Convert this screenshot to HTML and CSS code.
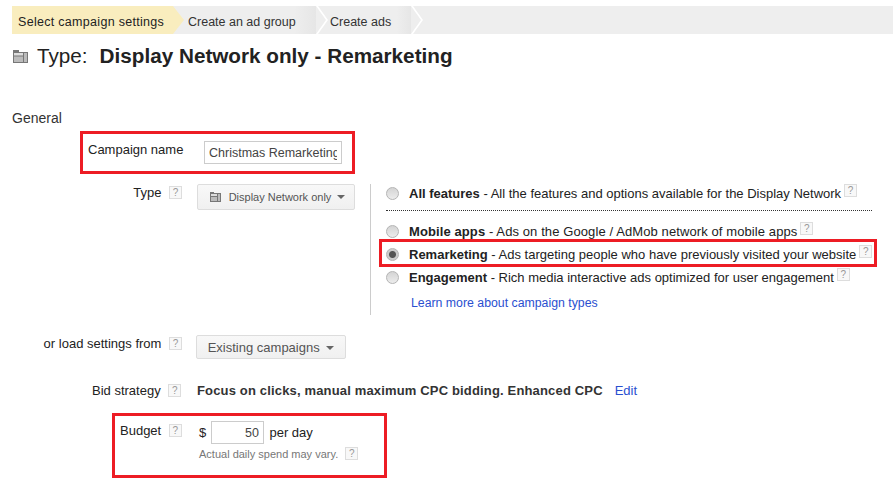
FILE: index.html
```html
<!DOCTYPE html>
<html lang="en">
<head>
    <meta charset="UTF-8">
    <meta name="viewport" content="width=device-width, initial-scale=1.0">
    <title>Select campaign settings</title>
    <link rel="stylesheet" href="styles.css">
</head>
<body>
    <div class="steps">
        <div class="step step-active">Select campaign settings</div>
        <div class="step step-group">Create an ad group</div>
        <div class="step step-ads">Create ads</div>
    </div>

    <h1 class="page-title">
        <svg class="title-icon" width="15" height="13" viewBox="0 0 15 13"><path d="M0 0h6v2h9v11H0z" fill="#777"/><path d="M1 3h9v2.500H1z" fill="#ddd"/><path d="M1 6.500h9V12H1zM11 3h3v9h-3z" fill="#bbb"/></svg>
        <span class="title-type">Type:</span>
        <strong>Display Network only - Remarketing</strong>
    </h1>

    <h2 class="section-title">General</h2>

    <div class="name-box">
        <label class="name-label" for="campaignName">Campaign name</label>
        <input class="text-input name-input" type="text" id="campaignName" value="Christmas Remarketing">
    </div>

    <div class="type-row">
        <div class="row-label">Type <span class="help">?</span></div>
        <button class="btn type-btn">
            <svg class="btn-icon" width="11" height="10" viewBox="0 0 11 10"><path d="M0 0h4v1h7v9H0z" fill="#777"/><path d="M1 2h6v2H1z" fill="#ddd"/><path d="M1 5h6v4H1zM8 2h2v7H8z" fill="#bbb"/></svg>
            Display Network only <span class="caret"></span>
        </button>
        <div class="type-options">
            <div class="option option-all">
                <span class="radio"></span>
                <span><b>All features</b> - All the features and options available for the Display Network</span>
                <span class="help">?</span>
            </div>
            <div class="option option-mobile">
                <span class="radio"></span>
                <span><b>Mobile apps</b> - Ads on the Google / AdMob network of mobile apps</span>
                <span class="help">?</span>
            </div>
            <div class="option option-marked">
                <span class="radio radio-on"></span>
                <span><b>Remarketing</b> - Ads targeting people who have previously visited your website</span>
                <span class="help">?</span>
            </div>
            <div class="option option-engage">
                <span class="radio"></span>
                <span><b>Engagement</b> - Rich media interactive ads optimized for user engagement</span>
                <span class="help">?</span>
            </div>
            <a class="link learn-link" href="#">Learn more about campaign types</a>
        </div>
    </div>

    <div class="load-row">
        <div class="row-label">or load settings from <span class="help">?</span></div>
        <button class="btn load-btn">Existing campaigns <span class="caret"></span></button>
    </div>

    <div class="bid-row">
        <div class="bid-label">Bid strategy <span class="help">?</span></div>
        <b class="bid-text">Focus on clicks, manual maximum CPC bidding. Enhanced CPC</b>
        <a class="link" href="#">Edit</a>
    </div>

    <div class="budget-box">
        <div class="budget-label">Budget <span class="help">?</span></div>
        <div>
            <div class="budget-line">
                $ <input class="text-input budget-input" type="text" value="50"> per day
            </div>
            <div class="budget-note">Actual daily spend may vary. <span class="help">?</span></div>
        </div>
    </div>
</body>
</html>
```

FILE: styles.css
```css
body {
    margin: 0;
    font-family: "Liberation Sans", Arial, sans-serif;
    font-size: 13px;
    color: #222;
    background: #fff;
    overflow: hidden;
}

/* wizard steps */
.steps {
    display: flex;
    height: 28px;
    margin: 6px 0 0 12px;
    background: #eee;
    line-height: 32px;
    font-size: 12.500px;
    color: #333;
}

.step {
    position: relative;
    box-sizing: border-box;
    padding-left: 6px;
    background: linear-gradient(to right, #eee 85%, #e6e6e6);
}

.step::after {
    content: "";
    position: absolute;
    top: 0;
    right: -12px;
    width: 12px;
    height: 28px;
    background: #fff;
    clip-path: polygon(0 0, 2px 0, 100% 50%, 2px 100%, 0 100%, calc(100% - 2px) 50%);
    z-index: 2;
}

.step-active {
    width: 161px;
    background: #f9edbe;
    color: #222;
    letter-spacing: .3px;
}

.step-active::after {
    background: #f9edbe;
    width: 11px;
    right: -11px;
    clip-path: polygon(0 0, 100% 50%, 0 100%);
}

.step-group {
    width: 143px;
    padding-left: 15px;
}

.step-ads {
    width: 95px;
    padding-left: 14px;
}

/* heading */
.page-title {
    display: flex;
    align-items: center;
    height: 28px;
    margin: 8px 0 0 13px;
    font-size: 20.700px;
    font-weight: normal;
    color: #222;
}

.title-icon {
    margin-right: 9px;
}

.title-type {
    margin-right: 12px;
}

.section-title {
    margin: 38px 0 0 12px;
    font-size: 14px;
    font-weight: normal;
    line-height: 20px;
    color: #333;
}

/* form rows */
.help {
    display: inline-block;
    box-sizing: border-box;
    width: 13px;
    height: 13px;
    border: 1px solid #ddd;
    background: #f8f8f8;
    font-size: 10px;
    line-height: 11px;
    text-align: center;
    color: #999;
    vertical-align: 1px;
}

.link {
    color: #2a4fd0;
    text-decoration: none;
}

.text-input {
    box-sizing: border-box;
    height: 23px;
    padding: 0 4px;
    border: 1px solid #ccc;
    font-family: inherit;
    font-size: 12.500px;
    color: #444;
}

.name-box {
    box-sizing: border-box;
    display: flex;
    width: 275px;
    height: 43px;
    margin: 3px 0 0 80px;
    border: 3px solid #ed1c24;
}

.name-label {
    margin: 8px 0 0 5px;
    width: 116px;
}

.name-input {
    width: 138px;
    margin-top: 7px;
}

.type-row {
    display: flex;
    margin-top: 10px;
}

.row-label {
    box-sizing: border-box;
    width: 182px;
    padding-top: 1px;
    text-align: right;
    white-space: nowrap;
}

.row-label .help {
    margin-left: 4px;
}

.btn {
    box-sizing: border-box;
    border: 1px solid #ddd;
    border-radius: 2px;
    background: linear-gradient(#f8f8f8, #f0f0f0);
    font-family: inherit;
    color: #555;
}

.type-btn {
    width: 158px;
    height: 26px;
    margin-left: 15px;
    padding: 0 0 0 3px;
    font-size: 11px;
}

.btn-icon {
    margin-right: 5px;
    vertical-align: -1px;
}

.caret {
    display: inline-block;
    width: 0;
    height: 0;
    margin-left: 3px;
    border: 4px solid transparent;
    border-top-color: #666;
    border-bottom: 0;
    vertical-align: 2px;
}

.type-options {
    box-sizing: border-box;
    width: 510px;
    height: 131px;
    margin-left: 15px;
    border-left: 1px solid #ccc;
    padding-left: 15px;
}

.option {
    display: flex;
    align-items: center;
    height: 18px;
    white-space: nowrap;
}

.option .help {
    margin-left: 3px;
    vertical-align: 0;
    align-self: flex-start;
}

.option-all {
    width: 486px;
    padding-bottom: 8px;
    border-bottom: 1px dotted #333;
    margin-bottom: 11px;
}

.option-mobile {
    letter-spacing: .1px;
}

.option-marked {
    position: relative;
    margin-top: 5px;
}

/* red highlight drawn over the option */
.option-marked::after {
    content: "";
    position: absolute;
    left: -7px;
    top: -6px;
    width: 498px;
    height: 28px;
    box-sizing: border-box;
    border: 3px solid #ed1c24;
}

.option-engage {
    margin-top: 5px;
}

.radio {
    box-sizing: border-box;
    flex: none;
    width: 13px;
    height: 13px;
    margin-right: 10px;
    border-radius: 50%;
    border: 1px solid #b4b4b4;
    background: linear-gradient(#d4d4d4, #ececec);
}

.radio-on {
    background: radial-gradient(circle, #555 3px, #ccc 4px);
}

.learn-link {
    display: block;
    margin: 10px 0 0 25px;
    font-size: 12.300px;
}

.load-row {
    display: flex;
    margin-top: 20px;
}

.load-btn {
    width: 150px;
    height: 24px;
    margin-left: 14px;
    padding: 0;
    font-size: 13px;
}

.bid-row {
    display: flex;
    align-items: center;
    height: 20px;
    margin: 21px 0 0 92px;
}

.bid-label {
    width: 105px;
    white-space: nowrap;
}

.bid-label .help,
.budget-label .help {
    margin-left: 4px;
}

.bid-text {
    margin-right: 12px;
    color: #333;
    letter-spacing: .16px;
}

.budget-box {
    box-sizing: border-box;
    display: flex;
    width: 275px;
    height: 65px;
    margin: 13px 0 0 112px;
    border: 3px solid #ed1c24;
}

.budget-label {
    width: 84px;
    padding: 7px 0 0 5px;
    box-sizing: border-box;
    white-space: nowrap;
}

.budget-line {
    margin-top: 5px;
}

.budget-input {
    width: 53px;
    margin: 0 2px 0 1px;
    text-align: right;
}

.budget-note {
    margin-top: 3px;
    font-size: 11px;
    color: #777;
}

.budget-note .help {
    margin-left: 4px;
}
```
